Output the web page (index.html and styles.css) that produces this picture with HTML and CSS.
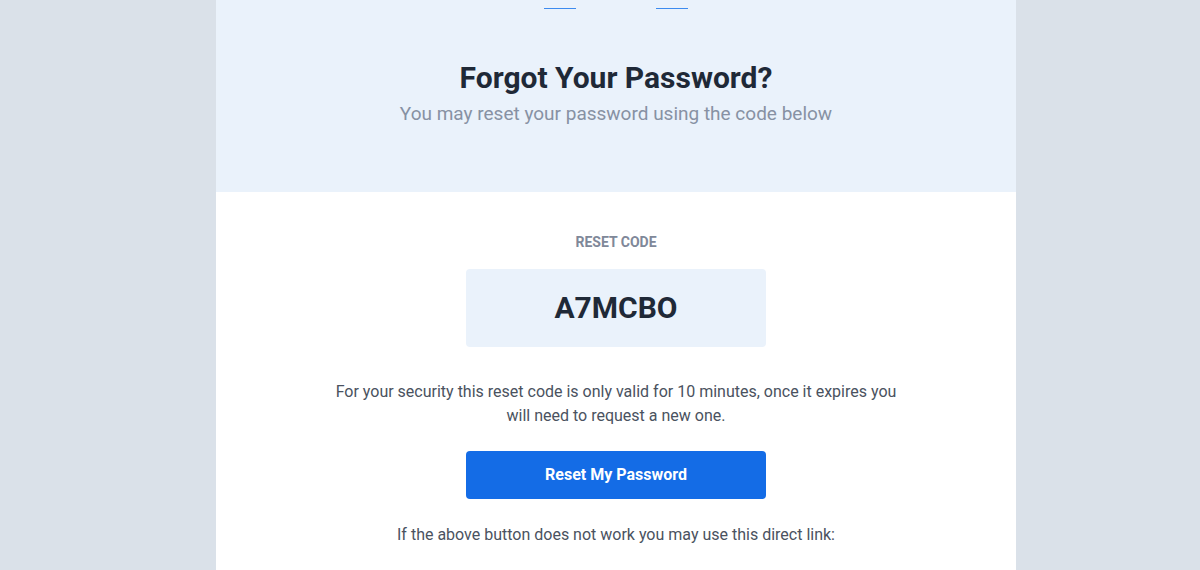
FILE: index.html
```html
<!DOCTYPE html>
<html lang="en">

<head>
  <meta charset="UTF-8">
  <meta name="viewport" content="width=device-width, initial-scale=1.0">
  <title>Forgot Your Password?</title>
  <link rel="stylesheet" href="styles.css">
</head>

<body>
  <div class="email">
    <header class="email-header">
      <div class="header-links">
        <span class="header-link"></span>
        <span class="header-link"></span>
      </div>
      <h1>Forgot Your Password?</h1>
      <p class="subtitle">You may reset your password using the code below</p>
    </header>

    <div class="email-body">
      <div class="code-label">Reset Code</div>
      <div class="code-box">A7MCBO</div>
      <p class="notice">For your security this reset code is only valid for 10 minutes, once it expires you will need to request a new one.</p>
      <a class="reset-button" href="#">Reset My Password</a>
      <p class="notice link-note">If the above button does not work you may use this direct link:</p>
    </div>
  </div>
</body>

</html>
```

FILE: styles.css
```css
body {
  font-family: Roboto, "Liberation Sans", Arial, sans-serif;
  margin: 0;
  padding-left: 32px;
  background-color: #dae1e9;
  color: #4a5260;
}

.email {
  width: 800px;
  margin: 0 auto;
  min-height: 100vh;
  background: white;
}

.email-header {
  background-color: #eaf2fb;
  text-align: center;
  padding-bottom: 65px;
}

.header-links {
  display: flex;
  justify-content: center;
  gap: 80px;
  height: 9px;
}

.header-link {
  width: 32px;
  border-bottom: 1px solid #3d8bef;
}

.email-header h1 {
  margin: 51px 0 0;
  font-size: 30px;
  line-height: 36px;
  font-weight: 700;
  color: #1f2937;
}

.subtitle {
  margin: 5px 0 0;
  font-size: 19px;
  line-height: 26px;
  color: #8791a3;
}

.email-body {
  display: flex;
  flex-direction: column;
  align-items: center;
  padding-top: 42px;
  text-align: center;
}

.code-label {
  font-size: 14px;
  line-height: 16px;
  font-weight: 700;
  text-transform: uppercase;
  color: #7f8899;
}

.code-box {
  margin-top: 19px;
  width: 300px;
  height: 78px;
  line-height: 78px;
  background-color: #eaf2fb;
  border-radius: 4px;
  font-size: 30px;
  font-weight: 700;
  color: #1f2937;
}

.notice {
  margin: 33px 0 0;
  max-width: 580px;
  font-size: 16px;
  line-height: 24px;
}

.reset-button {
  margin-top: 23px;
  width: 300px;
  height: 48px;
  line-height: 48px;
  background-color: #146ce6;
  border-radius: 4px;
  color: white;
  font-size: 16px;
  font-weight: 700;
  text-decoration: none;
}

.link-note {
  margin-top: 24px;
}
```
